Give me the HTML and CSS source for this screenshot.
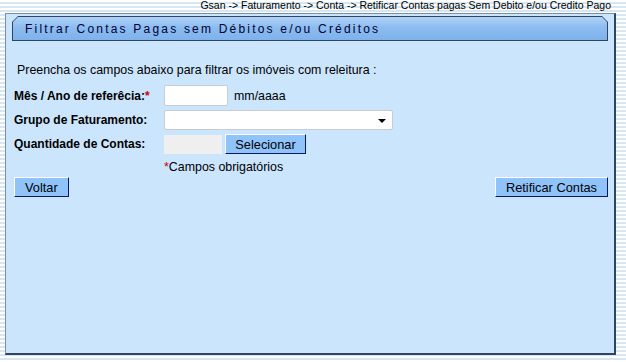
FILE: index.html
```html
<!DOCTYPE html>
<html>
	<head>
		<meta charset="utf-8" />
		<title>Filtrar Contas Pagas</title>
		<link rel="stylesheet" href="styles.css">
	</head>
	<body>
		<div class="crumb">Gsan -&gt; Faturamento -&gt; Conta -&gt; Retificar Contas pagas Sem Debito e/ou Credito Pago</div>
		<div class="panel">
			<div class="tab">
				<div class="tab-in">Filtrar Contas Pagas sem Débitos e/ou Créditos</div>
			</div>
			<p class="intro">Preencha os campos abaixo para filtrar os imóveis com releitura :</p>
			<div class="row">
				<label class="lbl">Mês / Ano de referêcia:<span class="req">*</span></label>
				<input class="txt txt-mes" type="text">
				<span class="hint">mm/aaaa</span>
			</div>
			<div class="row">
				<label class="lbl">Grupo de Faturamento:</label>
				<div class="sel"><span class="arrow"></span></div>
			</div>
			<div class="row">
				<label class="lbl">Quantidade de Contas:</label>
				<input class="txt txt-qtd" type="text" disabled>
				<button class="btn btn-sel">Selecionar</button>
			</div>
			<div class="row row-obrig">
				<span class="lbl"></span>
				<span class="obrig"><span class="req">*</span>Campos obrigatórios</span>
			</div>
			<div class="actions">
				<button class="btn">Voltar</button>
				<button class="btn">Retificar Contas</button>
			</div>
		</div>
	</body>
</html>
```
FILE: styles.css
```css
*{
	padding: 0;
	margin: 0;
	box-sizing: border-box;
}
body{
	width: 626px;
	height: 362px;
	overflow: hidden;
	font-family: "Liberation Sans", Arial, sans-serif;
	font-size: 12px;
	color: #000;
	background: repeating-linear-gradient(#fff 0, #fff 2px, #d6e6f2 2px, #d6e6f2 4px);
}
.crumb{
	height: 13px;
	line-height: 10px;
	font-size: 10.5px;
	text-align: right;
	padding-right: 15px;
	color: #000;
}
.panel{
	margin-left: 5px;
	width: 611px;
	height: 342px;
	background: #cbe5fc;
	border: 1px solid #7c8ea0;
	border-right: 2px solid #2f4560;
	border-bottom: 2px solid #2f4560;
	padding: 2px 6px 0 8px;
}
.tab{
	height: 25px;
	margin-left: -2px;
	background: #2f4560;
	padding: 1px;
	clip-path: polygon(6px 0, calc(100% - 6px) 0, 100% 6px, 100% 100%, 0 100%, 0 6px);
}
.tab-in{
	height: 100%;
	background: linear-gradient(#b0d2f8, #8cbcf0 45%, #7eb2ec);
	clip-path: polygon(5px 0, calc(100% - 5px) 0, 100% 5px, 100% 100%, 0 100%, 0 5px);
	font-size: 12px;
	letter-spacing: 2.2px;
	line-height: 24px;
	padding-left: 12px;
	color: #000033;
}
.intro{
	margin-top: 22px;
	padding-left: 3px;
	line-height: 14px;
	height: 22px;
	font-size: 12.4px;
}
.row{
	display: flex;
	align-items: center;
	margin-bottom: 4px;
}
.lbl{
	width: 150px;
	font-weight: bold;
	flex: none;
}
.req{
	color: #cc0000;
}
.txt{
	height: 21px;
	border: 1px solid #c6ccd2;
	border-radius: 2px;
	background: #fff;
	font: inherit;
}
.txt-mes{
	width: 64px;
}
.txt-qtd{
	width: 58px;
	height: 19px;
	background: #efefef;
	border-color: #efefef;
	border-radius: 0;
}
.hint{
	margin-left: 6px;
	font-size: 12.4px;
}
.sel{
	width: 229px;
	height: 20px;
	background: #fff;
	border: 1px solid #c6ccd2;
	border-radius: 2px;
	position: relative;
}
.arrow{
	position: absolute;
	right: 6px;
	top: 8px;
	border-left: 4px solid transparent;
	border-right: 4px solid transparent;
	border-top: 4px solid #000;
}
.btn{
	height: 20px;
	padding: 0 10px;
	background: #8fc3fa;
	border: 1px solid;
	border-color: #fff #0a1a5a #0a1a5a #fff;
	font-family: inherit;
	font-size: 12.8px;
	color: #000;
	line-height: 17px;
}
.btn-sel{
	margin-left: 3px;
	width: 81px;
	padding: 0;
}
.row-obrig{
	margin-top: 5px;
	margin-bottom: 0;
	height: 15px;
}
.obrig{
	font-size: 12.4px;
}
.actions{
	display: flex;
	justify-content: space-between;
	margin-top: 3px;
}
```
